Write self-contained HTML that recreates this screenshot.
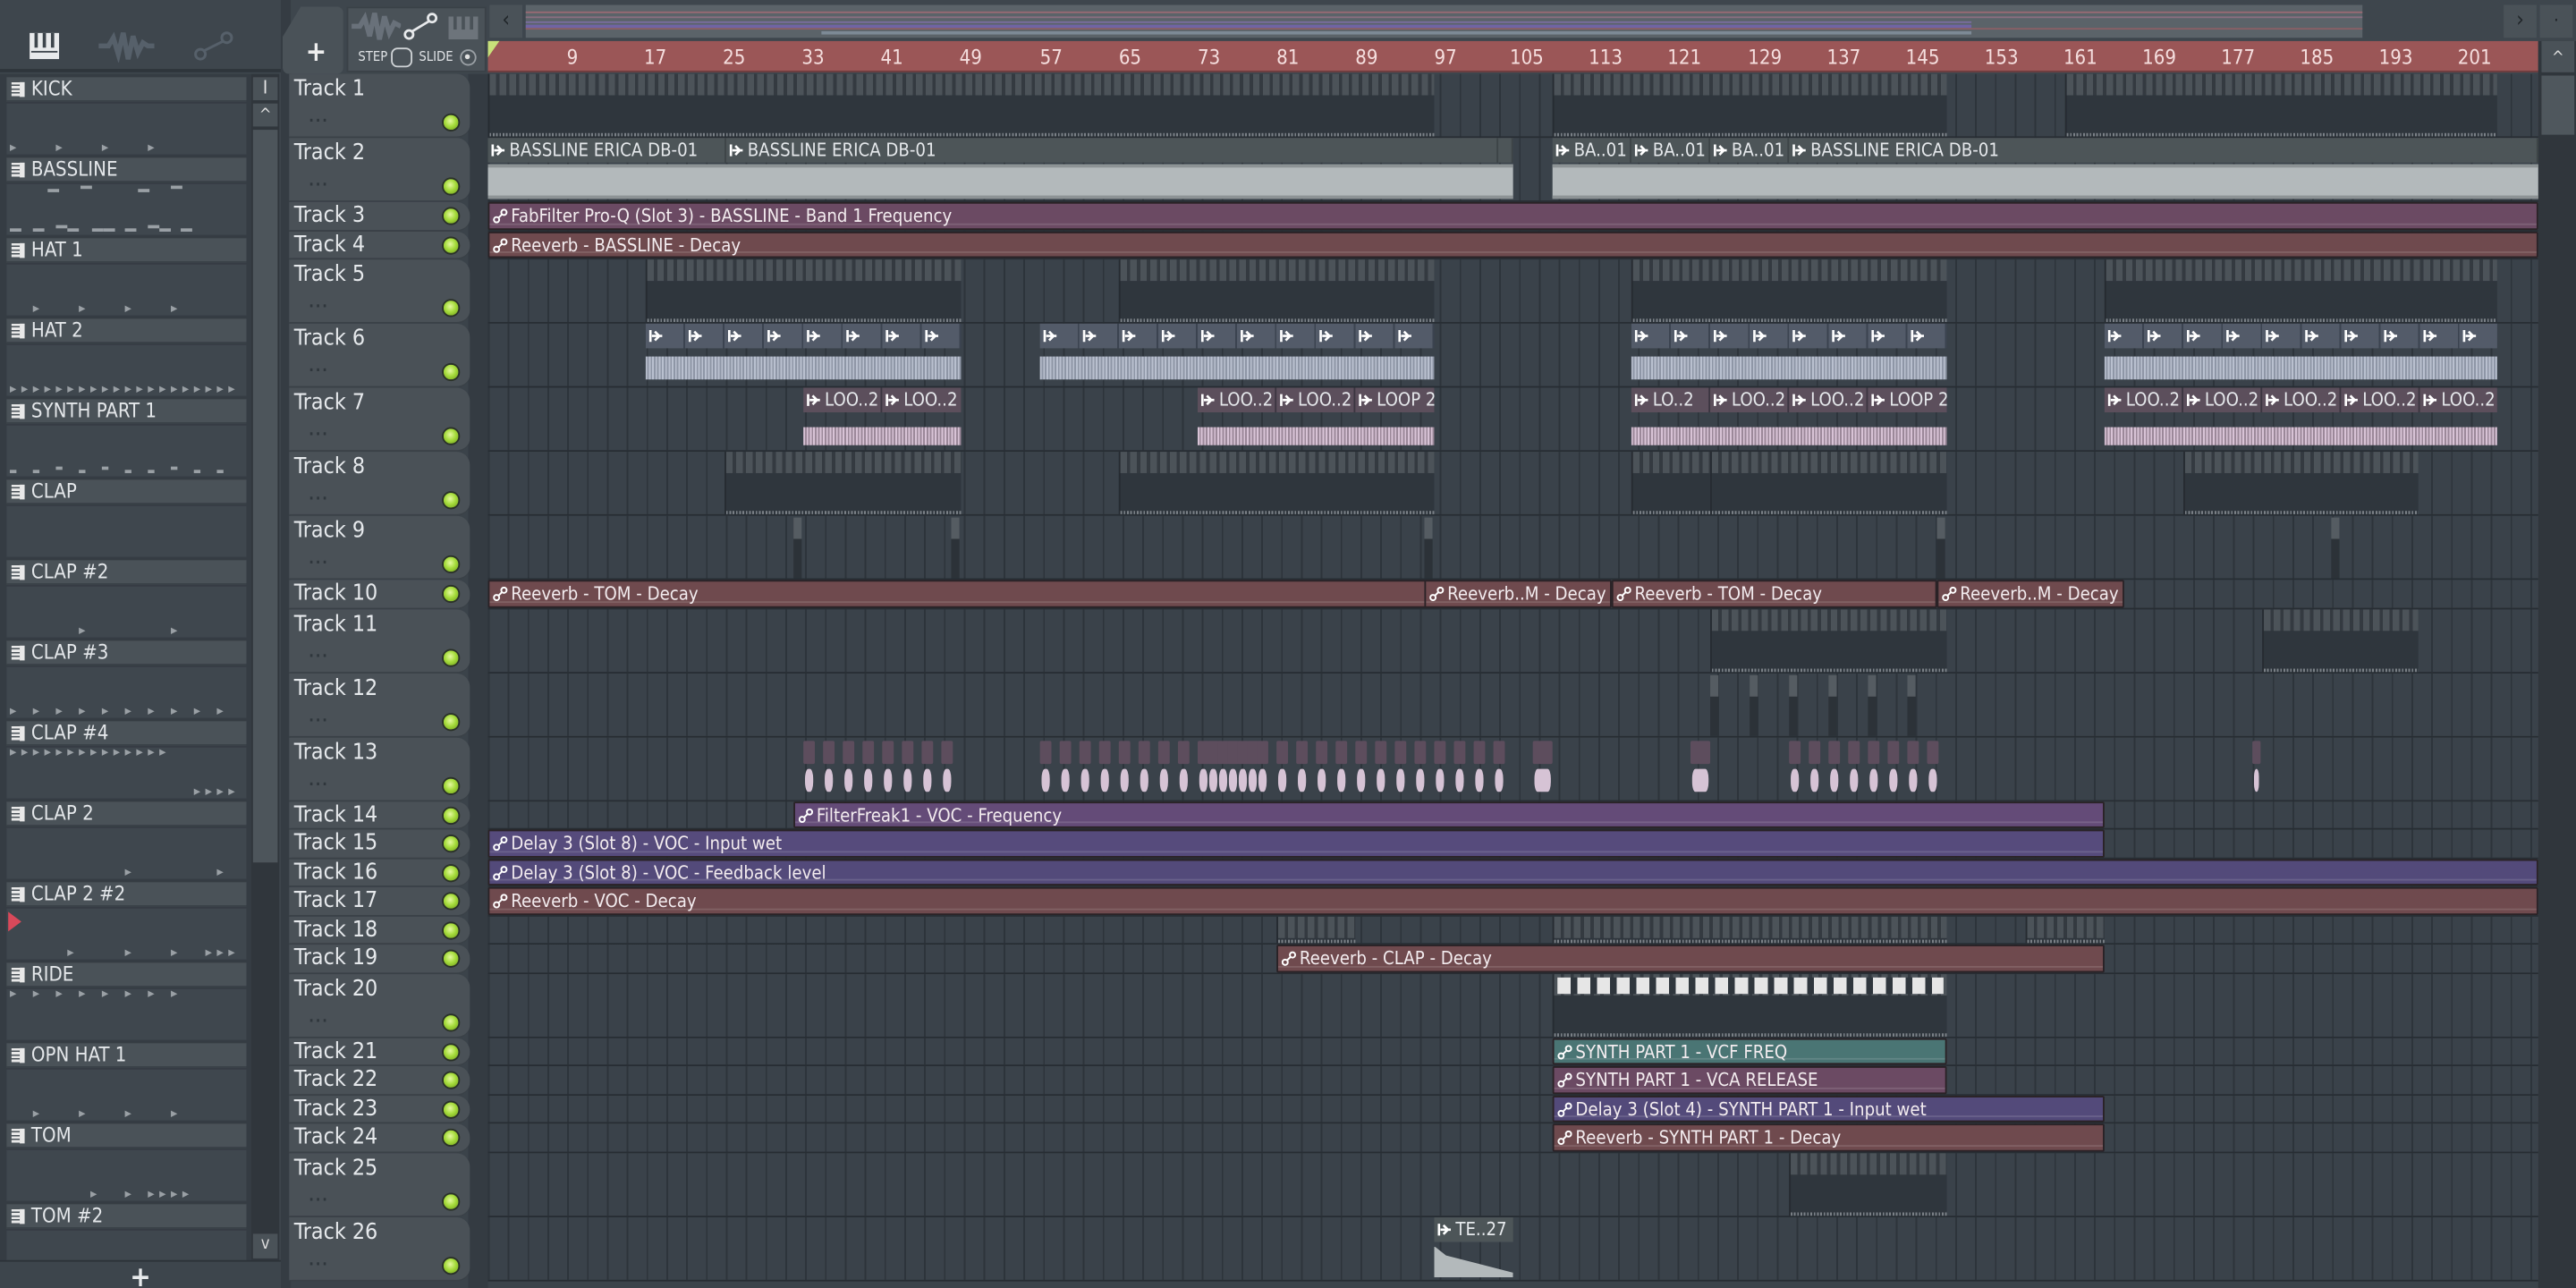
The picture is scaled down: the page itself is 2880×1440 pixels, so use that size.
<!DOCTYPE html>
<html><head><meta charset="utf-8"><style>
*{margin:0;padding:0;box-sizing:border-box}
html,body{width:2880px;height:1440px;overflow:hidden;background:#353c43}
#w{position:absolute;left:0;top:0;width:1568px;height:784px;transform:scale(1.836735);transform-origin:0 0;background:#3b434a;font-family:"Liberation Sans Narrow","DejaVu Sans Condensed","Liberation Sans",sans-serif;font-stretch:condensed;color:#e6e9ec;overflow:hidden}
.abs{position:absolute}
#lp{left:0;top:0;width:171px;height:784px;background:#3d454c}
#lph{left:0;top:0;width:171px;height:44px;background:#3e464d;border-bottom:2px solid #2e353b}
.ch{position:absolute;left:3px;width:148px;height:49px}
.ch .nb{position:absolute;left:1px;top:0;width:146px;height:15px;background:#4a5258;border-bottom:1px solid #3a4147;font-size:12px;line-height:15px;padding-left:15px;color:#e4e7ea}
.ch .nb i{position:absolute;left:3px;top:3px;width:8px;height:9px;background:repeating-linear-gradient(#e8e8e8 0 1.5px,#4a5258 1.5px 2.3px);border-right:3px solid #e8e8e8}
.ch .bd{position:absolute;left:1px;top:16px;width:146px;height:31px;background:#3f474e}
.st{position:absolute;width:0;height:0;border-left:4px solid #9aa0a5;border-top:2px solid transparent;border-bottom:2px solid transparent}
.nt{position:absolute;height:2px;width:7px;background:#9aa0a5}
#th{left:176px;top:45px;width:110px}
.h{position:relative;background:#4a5157;border-radius:0 8px 8px 0;border-bottom:1px solid #3a4147;font-size:13.5px;padding-left:3px}
.h.t{height:39px;line-height:18px}
.h.s{height:17.5px;line-height:17px}
.led{position:absolute;right:6px;width:11px;height:11px;border-radius:50%;background:radial-gradient(circle at 45% 40%,#e4f7a0 0,#a6dc3c 45%,#6c9a18 100%);border:1.5px solid #2a3128}
.h.t .led{bottom:3px}
.h.s .led{top:3px}
.h.t b{position:absolute;left:12px;bottom:2px;font-size:9px;color:#2f363c;letter-spacing:1px}
#g{left:297px;top:45px;width:1248px}
.r{position:relative;border-bottom:1px solid #272d33;background:repeating-linear-gradient(90deg,#2d343b 0 1px,#3a424a 1px 12.07px)}
.r.t{height:39px}.r.s{height:17.5px}
.c{position:absolute;top:0;bottom:0}
.pat{background:#2f363d;border-left:1px solid #262b31}
.pat:before{content:"";position:absolute;left:0;right:0;top:0;height:13px;background:repeating-linear-gradient(90deg,#4f565c 0 4px,#343a41 4px 6.035px);opacity:.9}
.pat:after{content:"";position:absolute;left:0;right:0;bottom:0;height:2px;background:repeating-linear-gradient(90deg,#7a8086 0 1px,#2f363d 1px 2px)}
.au .hd{position:absolute;left:0;right:0;top:0;height:15px;font-size:11px;line-height:15px;white-space:nowrap;overflow:hidden}
.au .wv{position:absolute;left:0;right:0;top:16px;bottom:1px}
.a2 .hd{background:#4d5558;border-right:1px solid #3d4447}
.a2 .wv{background:#b3b9bb;border-top:2px solid #8d9395;border-bottom:2px solid #8d9395}
.a6 .hd{background:#535b69}
.a6 .wv{background:repeating-linear-gradient(90deg,#b9c0cf 0 1px,#8e96a6 1px 2px);top:20px;bottom:4px}
.a7 .hd{background:#5c4f5c}
.a7 .wv{background:repeating-linear-gradient(90deg,#d8c3d6 0 1px,#9b8899 1px 2px);top:24px;bottom:3px}
.seg{position:absolute;top:0;height:15px;border-right:1px solid #3b4350;padding-left:2px}
.am{font-size:11px;line-height:16px;padding-left:2px;white-space:nowrap;overflow:hidden;border:1px solid #2a2226;border-radius:1px;color:#f3ecef}
.am:after{content:"";position:absolute;left:0;right:0;bottom:2px;height:1px;background:rgba(255,255,255,.13)}
.rd{background:#6f4a4e}.pk{background:#6b4a63}.pu{background:#644b78}.bl{background:#534a7a}.tl{background:#4a7574}
.ic{display:inline-block;width:9px;height:9px;margin-right:2px;vertical-align:-1px}
.sm{position:absolute;top:2px;width:7px;height:35px}
.sm:before{content:"";position:absolute;left:0;right:0;top:0;height:14px;background:#5d4d5d;border-radius:1px}
.sm:after{content:"";position:absolute;left:1px;right:1px;top:17px;bottom:4px;background:#d6c3d5;border-radius:2px/6px}
.stk{position:absolute;top:1px;width:5px;height:37px;background:#2c3238}
.stk:before{content:"";position:absolute;left:0;right:0;top:0;height:13px;background:#555c62}
.i6{position:absolute;top:3px;width:9px;height:9px}
</style></head><body><div id="w">

<div id="lp" class="abs"></div>
<div id="lph" class="abs">
 <svg class="abs" style="left:18px;top:20px" width="18" height="16" viewBox="0 0 18 16"><rect x="0" y="0" width="18" height="16" fill="#e8eaec"/><rect x="3" y="0" width="2" height="9" fill="#3e464d"/><rect x="8" y="0" width="2" height="9" fill="#3e464d"/><rect x="13" y="0" width="2" height="9" fill="#3e464d"/><rect x="1" y="11" width="16" height="1" fill="#3e464d"/></svg>
 <svg class="abs" style="left:60px;top:18px" width="34" height="20" viewBox="0 0 34 20"><path d="M0 10 L6 10 L9 5 L12 15 L15 2 L18 18 L21 4 L24 14 L27 8 L30 10 L34 10" stroke="#56606a" stroke-width="3" fill="none"/></svg>
 <svg class="abs" style="left:118px;top:19px" width="24" height="18" viewBox="0 0 24 18"><circle cx="4" cy="14" r="3" stroke="#56606a" stroke-width="1.6" fill="none"/><circle cx="20" cy="4" r="3" stroke="#56606a" stroke-width="1.6" fill="none"/><line x1="6" y1="12" x2="18" y2="6" stroke="#56606a" stroke-width="1.6"/></svg>
</div>
<div class="abs" style="left:0;top:45px;width:153px;height:740px;background:#353c43"></div>

<div class="ch" style="top:47px"><div class="nb"><i></i>KICK</div><div class="bd"><span class="st" style="left:2px;top:25px"></span><span class="st" style="left:30px;top:25px"></span><span class="st" style="left:58px;top:25px"></span><span class="st" style="left:86px;top:25px"></span></div></div>
<div class="ch" style="top:96px"><div class="nb"><i></i>BASSLINE</div><div class="bd"><span class="nt" style="left:25px;top:3px"></span><span class="nt" style="left:45px;top:1px"></span><span class="nt" style="left:80px;top:3px"></span><span class="nt" style="left:100px;top:1px"></span><span class="nt" style="left:2px;top:27px"></span><span class="nt" style="left:16px;top:27px"></span><span class="nt" style="left:30px;top:25px"></span><span class="nt" style="left:37px;top:27px"></span><span class="nt" style="left:52px;top:27px"></span><span class="nt" style="left:59px;top:27px"></span><span class="nt" style="left:72px;top:27px"></span><span class="nt" style="left:86px;top:25px"></span><span class="nt" style="left:93px;top:27px"></span><span class="nt" style="left:106px;top:27px"></span></div></div>
<div class="ch" style="top:145px"><div class="nb"><i></i>HAT 1</div><div class="bd"><span class="st" style="left:16px;top:25px"></span><span class="st" style="left:44px;top:25px"></span><span class="st" style="left:72px;top:25px"></span><span class="st" style="left:100px;top:25px"></span></div></div>
<div class="ch" style="top:194px"><div class="nb"><i></i>HAT 2</div><div class="bd"><span class="st" style="left:2px;top:25px"></span><span class="st" style="left:9px;top:25px"></span><span class="st" style="left:16px;top:25px"></span><span class="st" style="left:23px;top:25px"></span><span class="st" style="left:30px;top:25px"></span><span class="st" style="left:37px;top:25px"></span><span class="st" style="left:44px;top:25px"></span><span class="st" style="left:51px;top:25px"></span><span class="st" style="left:58px;top:25px"></span><span class="st" style="left:65px;top:25px"></span><span class="st" style="left:72px;top:25px"></span><span class="st" style="left:79px;top:25px"></span><span class="st" style="left:86px;top:25px"></span><span class="st" style="left:93px;top:25px"></span><span class="st" style="left:100px;top:25px"></span><span class="st" style="left:107px;top:25px"></span><span class="st" style="left:114px;top:25px"></span><span class="st" style="left:121px;top:25px"></span><span class="st" style="left:128px;top:25px"></span><span class="st" style="left:135px;top:25px"></span></div></div>
<div class="ch" style="top:243px"><div class="nb"><i></i>SYNTH PART 1</div><div class="bd"><span class="nt" style="left:2px;top:27px;width:4px"></span><span class="nt" style="left:16px;top:27px;width:4px"></span><span class="nt" style="left:30px;top:25px;width:4px"></span><span class="nt" style="left:44px;top:27px;width:4px"></span><span class="nt" style="left:58px;top:25px;width:4px"></span><span class="nt" style="left:72px;top:27px;width:4px"></span><span class="nt" style="left:86px;top:27px;width:4px"></span><span class="nt" style="left:100px;top:25px;width:4px"></span><span class="nt" style="left:114px;top:27px;width:4px"></span><span class="nt" style="left:128px;top:27px;width:4px"></span></div></div>
<div class="ch" style="top:292px"><div class="nb"><i></i>CLAP</div><div class="bd"></div></div>
<div class="ch" style="top:341px"><div class="nb"><i></i>CLAP #2</div><div class="bd"><span class="st" style="left:44px;top:25px"></span><span class="st" style="left:100px;top:25px"></span></div></div>
<div class="ch" style="top:390px"><div class="nb"><i></i>CLAP #3</div><div class="bd"><span class="st" style="left:2px;top:25px"></span><span class="st" style="left:16px;top:25px"></span><span class="st" style="left:30px;top:25px"></span><span class="st" style="left:44px;top:25px"></span><span class="st" style="left:58px;top:25px"></span><span class="st" style="left:72px;top:25px"></span><span class="st" style="left:86px;top:25px"></span><span class="st" style="left:100px;top:25px"></span><span class="st" style="left:114px;top:25px"></span><span class="st" style="left:128px;top:25px"></span></div></div>
<div class="ch" style="top:439px"><div class="nb"><i></i>CLAP #4</div><div class="bd"><span class="st" style="left:2px;top:1px"></span><span class="st" style="left:9px;top:1px"></span><span class="st" style="left:16px;top:1px"></span><span class="st" style="left:23px;top:1px"></span><span class="st" style="left:30px;top:1px"></span><span class="st" style="left:37px;top:1px"></span><span class="st" style="left:44px;top:1px"></span><span class="st" style="left:51px;top:1px"></span><span class="st" style="left:58px;top:1px"></span><span class="st" style="left:65px;top:1px"></span><span class="st" style="left:72px;top:1px"></span><span class="st" style="left:79px;top:1px"></span><span class="st" style="left:86px;top:1px"></span><span class="st" style="left:93px;top:1px"></span><span class="st" style="left:114px;top:25px"></span><span class="st" style="left:121px;top:25px"></span><span class="st" style="left:128px;top:25px"></span><span class="st" style="left:135px;top:25px"></span></div></div>
<div class="ch" style="top:488px"><div class="nb"><i></i>CLAP 2</div><div class="bd"><span class="st" style="left:72px;top:25px"></span><span class="st" style="left:128px;top:25px"></span></div></div>
<div class="ch" style="top:537px"><div class="nb"><i></i>CLAP 2 #2</div><div class="bd"><span class="st" style="left:72px;top:25px"></span><span class="st" style="left:100px;top:25px"></span><span class="st" style="left:128px;top:25px"></span><span class="st" style="left:37px;top:25px"></span><span class="st" style="left:121px;top:25px"></span><span class="st" style="left:135px;top:25px"></span></div></div>
<div class="abs" style="left:5px;top:555px;width:0;height:0;border-left:8px solid #d8495a;border-top:6px solid transparent;border-bottom:6px solid transparent"></div>
<div class="ch" style="top:586px"><div class="nb"><i></i>RIDE</div><div class="bd"><span class="st" style="left:2px;top:1px"></span><span class="st" style="left:16px;top:1px"></span><span class="st" style="left:30px;top:1px"></span><span class="st" style="left:44px;top:1px"></span><span class="st" style="left:58px;top:1px"></span><span class="st" style="left:72px;top:1px"></span><span class="st" style="left:86px;top:1px"></span><span class="st" style="left:100px;top:1px"></span></div></div>
<div class="ch" style="top:635px"><div class="nb"><i></i>OPN HAT 1</div><div class="bd"><span class="st" style="left:16px;top:25px"></span><span class="st" style="left:44px;top:25px"></span><span class="st" style="left:72px;top:25px"></span><span class="st" style="left:100px;top:25px"></span></div></div>
<div class="ch" style="top:684px"><div class="nb"><i></i>TOM</div><div class="bd"><span class="st" style="left:51px;top:25px"></span><span class="st" style="left:72px;top:25px"></span><span class="st" style="left:86px;top:25px"></span><span class="st" style="left:93px;top:25px"></span><span class="st" style="left:100px;top:25px"></span><span class="st" style="left:107px;top:25px"></span></div></div>
<div class="ch" style="top:733px"><div class="nb"><i></i>TOM #2</div><div class="bd" style="height:26px"></div></div>
<div class="abs" style="left:0;top:767px;width:171px;height:17px;background:#3d454c;border-top:1px solid #2c3238;text-align:center;font-size:17px;line-height:20px;font-weight:bold;color:#e8eaec">+</div>
<div class="abs" style="left:153px;top:45px;width:17px;height:722px;background:#30363c"></div>
<div class="abs" style="left:154px;top:47px;width:15px;height:14px;background:#4a5258;color:#e8e8e8;font-size:11px;text-align:center;line-height:14px">I</div>
<div class="abs" style="left:154px;top:63px;width:15px;height:14px;background:#4a5258;color:#ddd;font-size:10px;text-align:center;line-height:16px">^</div>
<div class="abs" style="left:154px;top:79px;width:15px;height:446px;background:#4d555b"></div>
<div class="abs" style="left:154px;top:751px;width:15px;height:15px;background:#4a5258;color:#ddd;font-size:10px;text-align:center;line-height:14px">v</div>

<div class="abs" style="left:171px;top:0;width:6px;height:784px;background:#353c43"></div>
<div class="abs" style="left:177px;top:0;width:1391px;height:45px;background:#3e464d"></div>
<div class="abs" style="left:172px;top:4px;width:37px;height:41px;background:#4a5258;clip-path:polygon(30% 0,100% 0,100% 100%,0 100%,0 45%);border-radius:4px"></div>
<div class="abs" style="left:186px;top:22px;font-size:17px;font-weight:bold;color:#eee">+</div>
<div class="abs" style="left:211px;top:4px;width:85px;height:40px;background:#4a5258;border:1px solid #3a4147"></div>
<svg class="abs" style="left:214px;top:7px" width="30" height="18" viewBox="0 0 30 18"><path d="M0 9 L5 9 L8 4 L11 15 L14 1 L17 17 L20 3 L23 13 L26 7 L30 9" stroke="#69717a" stroke-width="3" fill="none"/></svg>
<svg class="abs" style="left:245px;top:7px" width="22" height="18" viewBox="0 0 22 18"><circle cx="4" cy="14" r="2.5" stroke="#e8eaec" stroke-width="1.5" fill="none"/><circle cx="18" cy="4" r="2.5" stroke="#e8eaec" stroke-width="1.5" fill="none"/><line x1="6" y1="12" x2="16" y2="6" stroke="#e8eaec" stroke-width="1.5"/></svg>
<svg class="abs" style="left:273px;top:10px" width="18" height="14" viewBox="0 0 18 14"><rect width="18" height="14" fill="#6d747b"/><rect x="3" width="2" height="8" fill="#4a5258"/><rect x="8" width="2" height="8" fill="#4a5258"/><rect x="13" width="2" height="8" fill="#4a5258"/></svg>
<div class="abs" style="left:218px;top:30px;font-size:8px;color:#e0e3e6">STEP</div>
<div class="abs" style="left:238px;top:29px;width:13px;height:12px;border:1.5px solid #cfd3d6;border-radius:4px"></div>
<div class="abs" style="left:255px;top:30px;font-size:8px;color:#e0e3e6">SLIDE</div>
<div class="abs" style="left:280px;top:30px;width:10px;height:10px;border:1.5px solid #9aa0a5;border-radius:50%"><div style="margin:2px;width:3px;height:3px;background:#e0e0e0;border-radius:50%"></div></div>
<div class="abs" style="left:298px;top:3px;width:20px;height:20px;background:#4a5258;color:#1f2428;font-size:13px;text-align:center;line-height:20px">&lsaquo;</div>
<div class="abs" style="left:320px;top:3px;width:1118px;height:20px;background:#5b6369">
 <div class="abs" style="left:0;top:4px;width:1118px;height:1px;background:#9a6a74"></div>
 <div class="abs" style="left:0;top:7px;width:1118px;height:1px;background:#8a6e80"></div>
 <div class="abs" style="left:0;top:10px;width:880px;height:1px;background:#7a6da0"></div>
 <div class="abs" style="left:0;top:12px;width:880px;height:2px;background:#7064a4"></div>
 <div class="abs" style="left:0;top:14px;width:1118px;height:1px;background:#8a6066"></div>
 <div class="abs" style="left:180px;top:16px;width:700px;height:2px;background:#7d8a96"></div>
</div>
<div class="abs" style="left:1524px;top:3px;width:20px;height:20px;background:#4a5258;color:#1f2428;font-size:13px;text-align:center;line-height:20px">&rsaquo;</div>
<div class="abs" style="left:1546px;top:3px;width:20px;height:20px;background:#4a5258;color:#1f2428;font-size:11px;text-align:center;line-height:20px">·</div>
<div class="abs" style="left:297px;top:25px;width:1248px;height:19px;background:#9b5657;border-bottom:1px solid #6d3d3e;font-size:12px;color:#f5dede;line-height:20px">
 <div class="abs" style="left:0;top:0;width:0;height:0;border-top:10px solid #c8e07a;border-right:7px solid transparent"></div>
 <span class="abs" style="left:48px">9</span><span class="abs" style="left:95px">17</span><span class="abs" style="left:143px">25</span><span class="abs" style="left:191px">33</span><span class="abs" style="left:239px">41</span><span class="abs" style="left:287px">49</span><span class="abs" style="left:336px">57</span><span class="abs" style="left:384px">65</span><span class="abs" style="left:432px">73</span><span class="abs" style="left:480px">81</span><span class="abs" style="left:528px">89</span><span class="abs" style="left:576px">97</span><span class="abs" style="left:622px">105</span><span class="abs" style="left:670px">113</span><span class="abs" style="left:718px">121</span><span class="abs" style="left:767px">129</span><span class="abs" style="left:815px">137</span><span class="abs" style="left:863px">145</span><span class="abs" style="left:911px">153</span><span class="abs" style="left:959px">161</span><span class="abs" style="left:1007px">169</span><span class="abs" style="left:1055px">177</span><span class="abs" style="left:1103px">185</span><span class="abs" style="left:1151px">193</span><span class="abs" style="left:1199px">201</span>
</div>
<div class="abs" style="left:1545px;top:25px;width:23px;height:759px;background:#30363c"></div>
<div class="abs" style="left:1547px;top:25px;width:20px;height:19px;background:#4a5258;color:#ddd;font-size:10px;text-align:center;line-height:22px">^</div>
<div class="abs" style="left:1547px;top:46px;width:20px;height:36px;background:#4f575d"></div>
<div class="abs" style="left:285px;top:45px;width:12px;height:739px;background:#343b42"></div>

<div id="th" class="abs">
<div class="h t">Track 1<span class="led"></span><b>...</b></div>
<div class="h t">Track 2<span class="led"></span><b>...</b></div>
<div class="h s">Track 3<span class="led"></span></div>
<div class="h s">Track 4<span class="led"></span></div>
<div class="h t">Track 5<span class="led"></span><b>...</b></div>
<div class="h t">Track 6<span class="led"></span><b>...</b></div>
<div class="h t">Track 7<span class="led"></span><b>...</b></div>
<div class="h t">Track 8<span class="led"></span><b>...</b></div>
<div class="h t">Track 9<span class="led"></span><b>...</b></div>
<div class="h s">Track 10<span class="led"></span></div>
<div class="h t">Track 11<span class="led"></span><b>...</b></div>
<div class="h t">Track 12<span class="led"></span><b>...</b></div>
<div class="h t">Track 13<span class="led"></span><b>...</b></div>
<div class="h s">Track 14<span class="led"></span></div>
<div class="h s">Track 15<span class="led"></span></div>
<div class="h s">Track 16<span class="led"></span></div>
<div class="h s">Track 17<span class="led"></span></div>
<div class="h s">Track 18<span class="led"></span></div>
<div class="h s">Track 19<span class="led"></span></div>
<div class="h t">Track 20<span class="led"></span><b>...</b></div>
<div class="h s">Track 21<span class="led"></span></div>
<div class="h s">Track 22<span class="led"></span></div>
<div class="h s">Track 23<span class="led"></span></div>
<div class="h s">Track 24<span class="led"></span></div>
<div class="h t">Track 25<span class="led"></span><b>...</b></div>
<div class="h t">Track 26<span class="led"></span><b>...</b></div>
</div>

<svg width="0" height="0" style="position:absolute"><defs>
<symbol id="pl" viewBox="0 0 10 10"><path d="M1 1 L1 9 M2 5 L9 5 M4 2 L7 5 L4 8" stroke="#fff" stroke-width="1.6" fill="none"/></symbol>
<symbol id="au" viewBox="0 0 10 10"><circle cx="2.5" cy="7.5" r="1.8" stroke="#fff" stroke-width="1.2" fill="none"/><circle cx="7.5" cy="2.5" r="1.8" stroke="#fff" stroke-width="1.2" fill="none"/><line x1="3.8" y1="6.2" x2="6.2" y2="3.8" stroke="#fff" stroke-width="1.2"/></symbol>
</defs></svg>

<div id="g" class="abs">
<div class="r t"><div class="c pat" style="left:0;width:576px"></div><div class="c pat" style="left:648px;width:240px"></div><div class="c pat" style="left:960px;width:263px"></div></div>
<div class="r t">
 <div class="c au a2" style="left:0;width:624px"><div class="hd"><span class="seg" style="left:0;width:145px;border-color:#3d4447"><svg class="ic"><use href="#pl"/></svg>BASSLINE ERICA DB-01</span><span class="seg" style="left:145px;width:470px;border-color:#3d4447"><svg class="ic"><use href="#pl"/></svg>BASSLINE ERICA DB-01</span></div><div class="wv"></div></div>
 <div class="c au a2" style="left:648px;width:600px"><div class="hd"><span class="seg" style="left:0;width:48px;border-color:#3d4447"><svg class="ic"><use href="#pl"/></svg>BA..01</span><span class="seg" style="left:48px;width:48px;border-color:#3d4447"><svg class="ic"><use href="#pl"/></svg>BA..01</span><span class="seg" style="left:96px;width:48px;border-color:#3d4447"><svg class="ic"><use href="#pl"/></svg>BA..01</span><span class="seg" style="left:144px;width:456px;border:0"><svg class="ic"><use href="#pl"/></svg>BASSLINE ERICA DB-01</span></div><div class="wv"></div></div>
</div>
<div class="r s"><div class="c am pk" style="left:0;width:1248px"><svg class="ic"><use href="#au"/></svg>FabFilter Pro-Q (Slot 3) - BASSLINE - Band 1 Frequency</div></div>
<div class="r s"><div class="c am rd" style="left:0;width:1248px"><svg class="ic"><use href="#au"/></svg>Reeverb - BASSLINE - Decay</div></div>
<div class="r t"><div class="c pat" style="left:96px;width:192px"></div><div class="c pat" style="left:384px;width:192px"></div><div class="c pat" style="left:696px;width:192px"></div><div class="c pat" style="left:984px;width:239px"></div></div>
<div class="r t">
 <div class="c au a6" style="left:96px;width:192px"><div class="hd" style="background:repeating-linear-gradient(90deg,#535b69 0 23px,#3b4350 23px 24px)"><svg class="i6" style="left:2px"><use href="#pl"/></svg><svg class="i6" style="left:26px"><use href="#pl"/></svg><svg class="i6" style="left:50px"><use href="#pl"/></svg><svg class="i6" style="left:74px"><use href="#pl"/></svg><svg class="i6" style="left:98px"><use href="#pl"/></svg><svg class="i6" style="left:122px"><use href="#pl"/></svg><svg class="i6" style="left:146px"><use href="#pl"/></svg><svg class="i6" style="left:170px"><use href="#pl"/></svg></div><div class="wv"></div></div>
 <div class="c au a6" style="left:336px;width:240px"><div class="hd" style="background:repeating-linear-gradient(90deg,#535b69 0 23px,#3b4350 23px 24px)"><svg class="i6" style="left:2px"><use href="#pl"/></svg><svg class="i6" style="left:26px"><use href="#pl"/></svg><svg class="i6" style="left:50px"><use href="#pl"/></svg><svg class="i6" style="left:74px"><use href="#pl"/></svg><svg class="i6" style="left:98px"><use href="#pl"/></svg><svg class="i6" style="left:122px"><use href="#pl"/></svg><svg class="i6" style="left:146px"><use href="#pl"/></svg><svg class="i6" style="left:170px"><use href="#pl"/></svg><svg class="i6" style="left:194px"><use href="#pl"/></svg><svg class="i6" style="left:218px"><use href="#pl"/></svg></div><div class="wv"></div></div>
 <div class="c au a6" style="left:696px;width:192px"><div class="hd" style="background:repeating-linear-gradient(90deg,#535b69 0 23px,#3b4350 23px 24px)"><svg class="i6" style="left:2px"><use href="#pl"/></svg><svg class="i6" style="left:26px"><use href="#pl"/></svg><svg class="i6" style="left:50px"><use href="#pl"/></svg><svg class="i6" style="left:74px"><use href="#pl"/></svg><svg class="i6" style="left:98px"><use href="#pl"/></svg><svg class="i6" style="left:122px"><use href="#pl"/></svg><svg class="i6" style="left:146px"><use href="#pl"/></svg><svg class="i6" style="left:170px"><use href="#pl"/></svg></div><div class="wv"></div></div>
 <div class="c au a6" style="left:984px;width:239px"><div class="hd" style="background:repeating-linear-gradient(90deg,#535b69 0 23px,#3b4350 23px 24px)"><svg class="i6" style="left:2px"><use href="#pl"/></svg><svg class="i6" style="left:26px"><use href="#pl"/></svg><svg class="i6" style="left:50px"><use href="#pl"/></svg><svg class="i6" style="left:74px"><use href="#pl"/></svg><svg class="i6" style="left:98px"><use href="#pl"/></svg><svg class="i6" style="left:122px"><use href="#pl"/></svg><svg class="i6" style="left:146px"><use href="#pl"/></svg><svg class="i6" style="left:170px"><use href="#pl"/></svg><svg class="i6" style="left:194px"><use href="#pl"/></svg><svg class="i6" style="left:218px"><use href="#pl"/></svg></div><div class="wv"></div></div>
</div>
<div class="r t">
 <div class="c au a7" style="left:192px;width:96px"><div class="hd"><span class="seg" style="left:0;width:48px;border-color:#3b3540"><svg class="ic"><use href="#pl"/></svg>LOO..2</span><span class="seg" style="left:48px;width:48px;border:0"><svg class="ic"><use href="#pl"/></svg>LOO..2</span></div><div class="wv"></div></div>
 <div class="c au a7" style="left:432px;width:144px"><div class="hd"><span class="seg" style="left:0;width:48px;border-color:#3b3540"><svg class="ic"><use href="#pl"/></svg>LOO..2</span><span class="seg" style="left:48px;width:48px;border-color:#3b3540"><svg class="ic"><use href="#pl"/></svg>LOO..2</span><span class="seg" style="left:96px;width:48px;border:0"><svg class="ic"><use href="#pl"/></svg>LOOP 2</span></div><div class="wv"></div></div>
 <div class="c au a7" style="left:696px;width:192px"><div class="hd"><span class="seg" style="left:0;width:48px;border-color:#3b3540"><svg class="ic"><use href="#pl"/></svg>LO..2</span><span class="seg" style="left:48px;width:48px;border-color:#3b3540"><svg class="ic"><use href="#pl"/></svg>LOO..2</span><span class="seg" style="left:96px;width:48px;border-color:#3b3540"><svg class="ic"><use href="#pl"/></svg>LOO..2</span><span class="seg" style="left:144px;width:48px;border:0"><svg class="ic"><use href="#pl"/></svg>LOOP 2</span></div><div class="wv"></div></div>
 <div class="c au a7" style="left:984px;width:239px"><div class="hd"><span class="seg" style="left:0;width:48px;border-color:#3b3540"><svg class="ic"><use href="#pl"/></svg>LOO..2</span><span class="seg" style="left:48px;width:48px;border-color:#3b3540"><svg class="ic"><use href="#pl"/></svg>LOO..2</span><span class="seg" style="left:96px;width:48px;border-color:#3b3540"><svg class="ic"><use href="#pl"/></svg>LOO..2</span><span class="seg" style="left:144px;width:48px;border-color:#3b3540"><svg class="ic"><use href="#pl"/></svg>LOO..2</span><span class="seg" style="left:192px;width:47px;border:0"><svg class="ic"><use href="#pl"/></svg>LOO..2</span></div><div class="wv"></div></div>
</div>
<div class="r t"><div class="c pat" style="left:144px;width:144px"></div><div class="c pat" style="left:384px;width:192px"></div><div class="c pat" style="left:696px;width:48px"></div><div class="c pat" style="left:744px;width:144px"></div><div class="c pat" style="left:1032px;width:143px"></div></div>
<div class="r t"><span class="stk" style="left:186px"></span><span class="stk" style="left:282px"></span><span class="stk" style="left:570px"></span><span class="stk" style="left:882px"></span><span class="stk" style="left:1122px"></span></div>
<div class="r s"><div class="c am rd" style="left:0;width:576px"><svg class="ic"><use href="#au"/></svg>Reeverb - TOM - Decay</div><div class="c am rd" style="left:570px;width:114px"><svg class="ic"><use href="#au"/></svg>Reeverb..M - Decay</div><div class="c am rd" style="left:684px;width:198px"><svg class="ic"><use href="#au"/></svg>Reeverb - TOM - Decay</div><div class="c am rd" style="left:882px;width:114px"><svg class="ic"><use href="#au"/></svg>Reeverb..M - Decay</div></div>
<div class="r t"><div class="c pat" style="left:744px;width:144px"></div><div class="c pat" style="left:1080px;width:95px"></div></div>
<div class="r t"><span class="stk" style="left:744px"></span><span class="stk" style="left:768px"></span><span class="stk" style="left:792px"></span><span class="stk" style="left:816px"></span><span class="stk" style="left:840px"></span><span class="stk" style="left:864px"></span></div>
<div class="r t">
<span class="sm" style="left:192px"></span><span class="sm" style="left:204px"></span><span class="sm" style="left:216px"></span><span class="sm" style="left:228px"></span><span class="sm" style="left:240px"></span><span class="sm" style="left:252px"></span><span class="sm" style="left:264px"></span><span class="sm" style="left:276px"></span>
<span class="sm" style="left:336px"></span><span class="sm" style="left:348px"></span><span class="sm" style="left:360px"></span><span class="sm" style="left:372px"></span><span class="sm" style="left:384px"></span><span class="sm" style="left:396px"></span><span class="sm" style="left:408px"></span><span class="sm" style="left:420px"></span><span class="sm" style="left:432px"></span><span class="sm" style="left:438px"></span><span class="sm" style="left:444px"></span><span class="sm" style="left:450px"></span><span class="sm" style="left:456px"></span><span class="sm" style="left:462px"></span><span class="sm" style="left:468px"></span><span class="sm" style="left:480px"></span><span class="sm" style="left:492px"></span><span class="sm" style="left:504px"></span><span class="sm" style="left:516px"></span><span class="sm" style="left:528px"></span><span class="sm" style="left:540px"></span><span class="sm" style="left:552px"></span><span class="sm" style="left:564px"></span><span class="sm" style="left:576px"></span><span class="sm" style="left:588px"></span><span class="sm" style="left:600px"></span><span class="sm" style="left:612px"></span>
<span class="sm" style="left:636px;width:12px"></span><span class="sm" style="left:732px;width:12px"></span>
<span class="sm" style="left:792px"></span><span class="sm" style="left:804px"></span><span class="sm" style="left:816px"></span><span class="sm" style="left:828px"></span><span class="sm" style="left:840px"></span><span class="sm" style="left:852px"></span><span class="sm" style="left:864px"></span><span class="sm" style="left:876px"></span>
<span class="sm" style="left:1074px;width:5px"></span>
</div>
<div class="r s"><div class="c am pu" style="left:186px;width:798px"><svg class="ic"><use href="#au"/></svg>FilterFreak1 - VOC - Frequency</div></div>
<div class="r s"><div class="c am bl" style="left:0;width:984px;background:#564b7c"><svg class="ic"><use href="#au"/></svg>Delay 3 (Slot 8) - VOC - Input wet</div></div>
<div class="r s"><div class="c am bl" style="left:0;width:1248px"><svg class="ic"><use href="#au"/></svg>Delay 3 (Slot 8) - VOC - Feedback level</div></div>
<div class="r s"><div class="c am rd" style="left:0;width:1248px"><svg class="ic"><use href="#au"/></svg>Reeverb - VOC - Decay</div></div>
<div class="r s"><div class="c pat" style="left:480px;width:48px"></div><div class="c pat" style="left:648px;width:240px"></div><div class="c pat" style="left:936px;width:48px"></div></div>
<div class="r s"><div class="c am rd" style="left:480px;width:504px"><svg class="ic"><use href="#au"/></svg>Reeverb - CLAP - Decay</div></div>
<div class="r t"><div class="c pat" style="left:648px;width:240px"><div style="position:absolute;left:2px;top:2px;right:2px;height:10px;background:repeating-linear-gradient(90deg,#e6e6e6 0 8px,#2f363d 8px 12px);z-index:1"></div></div></div>
<div class="r s"><div class="c am tl" style="left:648px;width:240px"><svg class="ic"><use href="#au"/></svg>SYNTH PART 1 - VCF FREQ</div></div>
<div class="r s"><div class="c am pk" style="left:648px;width:240px"><svg class="ic"><use href="#au"/></svg>SYNTH PART 1 - VCA RELEASE</div></div>
<div class="r s"><div class="c am bl" style="left:648px;width:336px"><svg class="ic"><use href="#au"/></svg>Delay 3 (Slot 4) - SYNTH PART 1 - Input wet</div></div>
<div class="r s"><div class="c am rd" style="left:648px;width:336px"><svg class="ic"><use href="#au"/></svg>Reeverb - SYNTH PART 1 - Decay</div></div>
<div class="r t"><div class="c pat" style="left:792px;width:96px"></div></div>
<div class="r t"><div class="c au" style="left:576px;width:48px"><div class="hd" style="background:#4d5558;padding-left:2px"><svg class="ic"><use href="#pl"/></svg>TE..27</div><div class="wv" style="top:18px;background:#b3b9bb;clip-path:polygon(0 0,15% 30%,100% 85%,100% 100%,0 100%)"></div></div></div>
</div>

</div></body></html>
